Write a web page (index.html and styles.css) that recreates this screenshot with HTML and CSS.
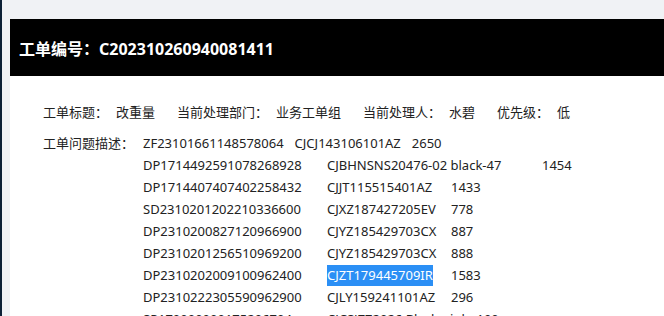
FILE: index.html
```
<!DOCTYPE html>
<html lang="zh-CN">
<head>
    <meta charset="UTF-8">
    <title>工单详情</title>
    <link rel="stylesheet" href="styles.css">
</head>
<body>

<div class="card">
    <div class="card-head">工单编号：C202310260940081411</div>

    <div class="info-row">
        <span class="item"><span class="label">工单标题：</span><span class="value">改重量</span></span>
        <span class="item"><span class="label">当前处理部门：</span><span class="value">业务工单组</span></span>
        <span class="item"><span class="label">当前处理人：</span><span class="value">水碧</span></span>
        <span class="item"><span class="label">优先级：</span><span class="value">低</span></span>
    </div>

    <div class="desc">
        <div class="desc-label">工单问题描述：</div>
        <div class="desc-body">
            <div class="line">ZF23101661148578064<span class="gap1"></span>CJCJ143106101AZ<span class="gap1"></span>2650</div>
            <div class="line"><span class="id">DP1714492591078268928</span><span class="code-wide">CJBHNSNS20476-02 black-47</span>1454</div>
            <div class="line"><span class="id">DP1714407407402258432</span><span class="code">CJJT115515401AZ</span>1433</div>
            <div class="line"><span class="id">SD2310201202210336600</span><span class="code">CJXZ187427205EV</span>778</div>
            <div class="line"><span class="id">DP2310200827120966900</span><span class="code">CJYZ185429703CX</span>887</div>
            <div class="line"><span class="id">DP2310201256510969200</span><span class="code">CJYZ185429703CX</span>888</div>
            <div class="line"><span class="id">DP2310202009100962400</span><span class="code"><span class="selected">CJZT179445709IR</span></span>1583</div>
            <div class="line"><span class="id">DP2310222305590962900</span><span class="code">CJLY159241101AZ</span>296</div>
            <div class="line"><span class="id">SP170000000175206704</span><span class="code-auto">CJCSJ772026 Black-pink</span>190</div>
        </div>
    </div>
</div>

</body>
</html>
```

FILE: styles.css
```
body {
    margin: 0;
    background: #f0f2f5;
    border-left: 2px solid #0d2036;
    min-height: 316px;
    font-family: "Noto Sans", "Noto Sans CJK SC", sans-serif;
    color: #222;
    overflow: hidden;
}
.card {
    margin: 19px 0 0 8px;
    background: #ffffff;
    min-height: 300px;
}
.card-head {
    height: 57px;
    background: #000000;
    color: #ffffff;
    font-size: 16px;
    font-weight: bold;
    display: flex;
    align-items: center;
    padding-left: 9px;
}
.info-row {
    display: flex;
    gap: 22px;
    margin-top: 25px;
    padding-left: 33px;
    font-size: 13px;
    line-height: 22px;
}
.item .value {
    margin-left: 8px;
}
.desc {
    display: flex;
    margin-top: 9px;
    padding-left: 33px;
    font-size: 13px;
    line-height: 22px;
}
.desc-label {
    width: 100px;
}
.line {
    white-space: nowrap;
}
.gap1 {
    display: inline-block;
    width: 11px;
}
.id {
    display: inline-block;
    width: 184px;
}
.code {
    display: inline-block;
    width: 124px;
}
.code-wide {
    display: inline-block;
    width: 215px;
}
.code-auto {
    margin-right: 8px;
}
.selected {
    display: inline-block;
    background: #2b8ff5;
    color: #ffffff;
    line-height: 21px;
}
```
